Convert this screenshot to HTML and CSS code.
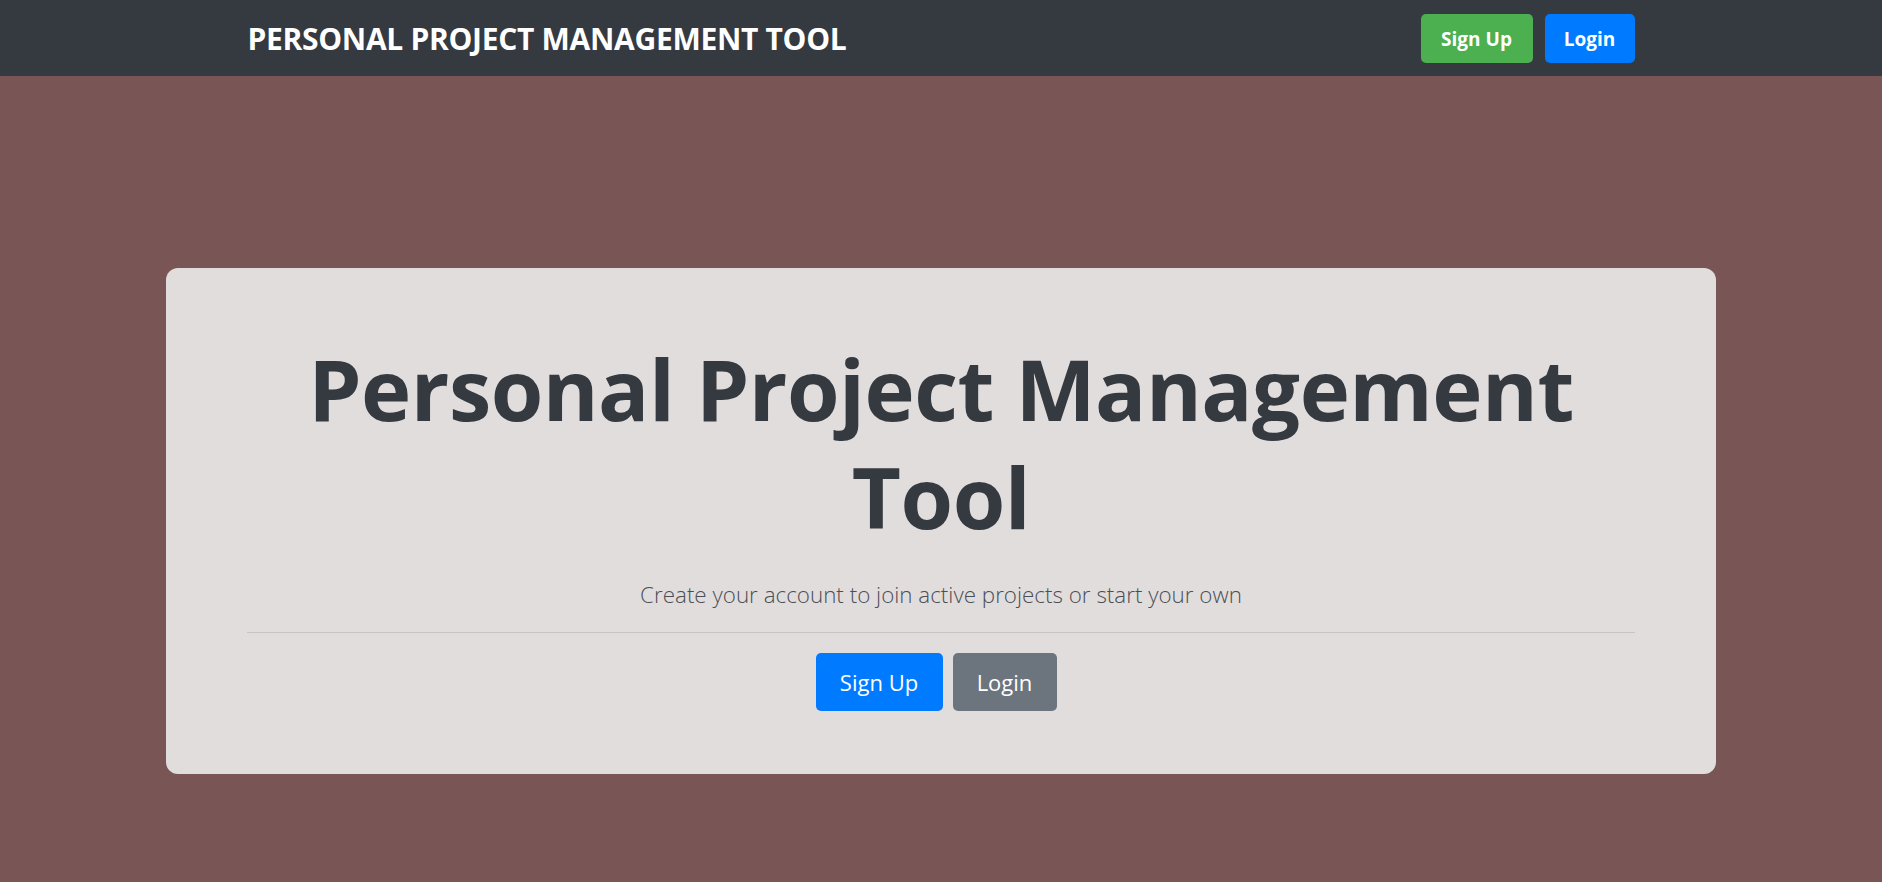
FILE: index.html
```html
<!DOCTYPE html>
<html lang="en">
<head>
<meta charset="utf-8">
<title>Personal Project Management Tool</title>
<link rel="stylesheet" href="styles.css">
</head>
<body>
<nav class="navbar">
  <div class="nav-inner">
    <a class="brand" href="#">Personal Project Management Tool</a>
    <div class="nav-actions">
      <a class="nbtn nbtn-green" href="#">Sign Up</a>
      <a class="nbtn nbtn-blue" href="#">Login</a>
    </div>
  </div>
</nav>
<main class="main">
  <section class="hero">
    <h1 class="hero-title">Personal Project Management Tool</h1>
    <p class="hero-lead">Create your account to join active projects or start your own</p>
    <hr class="hero-rule">
    <div class="hero-actions">
      <a class="btn btn-blue" href="#">Sign Up</a>
      <a class="btn btn-gray" href="#">Login</a>
    </div>
  </section>
</main>
</body>
</html>
```
FILE: styles.css
```css
* { box-sizing: border-box; }
html, body { margin: 0; padding: 0; }
body {
  background: #795655;
  font-family: "Open Sans", "Noto Sans", "Liberation Sans", sans-serif;
  height: 882px;
  overflow: hidden;
}
a { text-decoration: none; }

.navbar {
  background: #343a40;
  height: 76px;
}
.nav-inner {
  width: 1387px;
  height: 76px;
  margin: 0 auto;
  display: flex;
  align-items: center;
  justify-content: space-between;
}
.brand {
  color: #ffffff;
  font-size: 30px;
  font-weight: 700;
  text-transform: uppercase;
  letter-spacing: -0.3px;
}
.nav-actions {
  display: flex;
  gap: 12px;
  padding-top: 1px;
}
.nbtn {
  display: flex;
  align-items: center;
  justify-content: center;
  height: 49px;
  border-radius: 5px;
  color: #fff;
  font-size: 19px;
  font-weight: 700;
}
.nbtn-green { background: #4caf50; width: 112px; }
.nbtn-blue { background: #007bff; width: 90px; }

.main {
  padding-top: 192px;
}
.hero {
  width: 1550px;
  margin: 0 auto;
  background: #e2dddd;
  border-radius: 12px;
  padding: 66px 81px 63px;
  text-align: center;
}
.hero-title {
  margin: 0;
  color: #343a40;
  font-size: 85px;
  line-height: 108px;
  font-weight: 700;
  letter-spacing: -0.5px;
}
.hero-lead {
  margin: 29px 0 0;
  color: #4a4f55;
  font-size: 22.4px;
  font-weight: 300;
  line-height: 32px;
}
.hero-rule {
  margin: 21px 0 20px;
  border: 0;
  border-top: 1px solid #c9c4c4;
}
.hero-actions {
  display: flex;
  justify-content: center;
}
.btn {
  display: flex;
  align-items: center;
  justify-content: center;
  height: 58px;
  margin-right: 10px;
  border-radius: 5px;
  color: #fff;
  font-size: 22px;
}
.btn-blue { background: #007bff; width: 127px; }
.btn-gray { background: #6c757d; width: 104px; }
```
